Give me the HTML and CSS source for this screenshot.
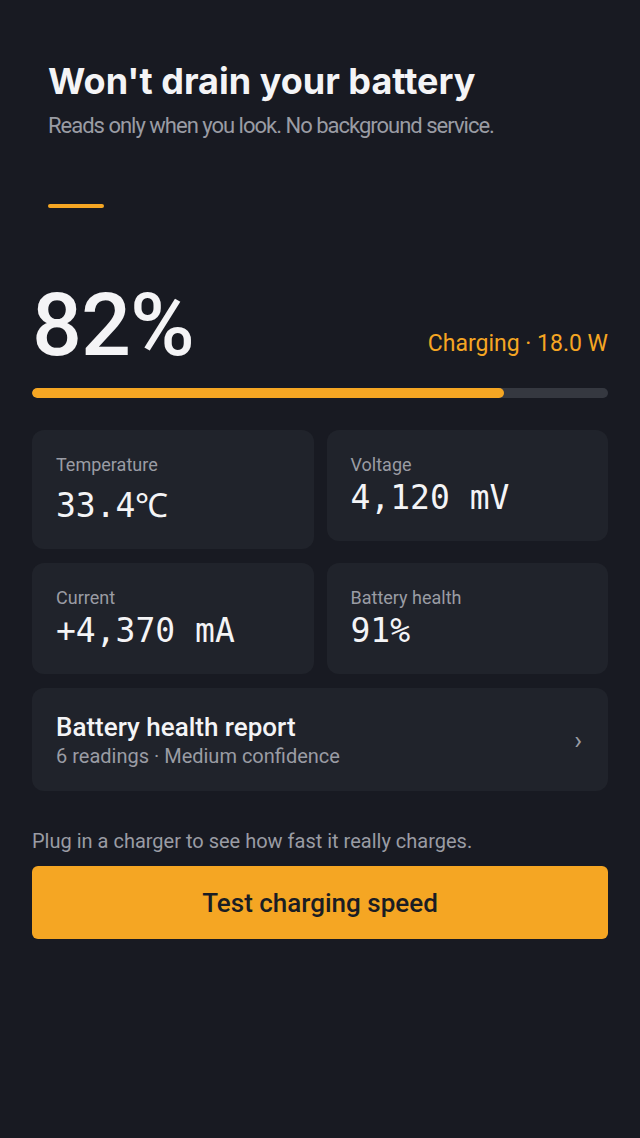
FILE: index.html
```html
<!DOCTYPE html>
<html>
<head>
<meta charset="utf-8">
<link rel="stylesheet" href="styles.css">
</head>
<body>
<main class="screen">
  <header class="intro">
    <h1 class="title">Won't drain your battery</h1>
    <p class="subtitle">Reads only when you look. No background service.</p>
    <div class="accent"></div>
  </header>

  <section class="level">
    <div class="level-row">
      <div class="percent">82%</div>
      <div class="status">Charging · 18.0 W</div>
    </div>
    <div class="bar"><div class="bar-fill" style="width:82%"></div></div>
  </section>

  <section class="grid">
    <div class="card">
      <div class="label">Temperature</div>
      <div class="value value--tall">33.4℃</div>
    </div>
    <div class="card">
      <div class="label">Voltage</div>
      <div class="value">4,120 mV</div>
    </div>
    <div class="card">
      <div class="label">Current</div>
      <div class="value">+4,370 mA</div>
    </div>
    <div class="card">
      <div class="label">Battery health</div>
      <div class="value">91%</div>
    </div>
  </section>

  <a class="report">
    <div class="report-text">
      <div class="report-title">Battery health report</div>
      <div class="report-sub">6 readings · Medium confidence</div>
    </div>
    <span class="chevron">›</span>
  </a>

  <p class="hint">Plug in a charger to see how fast it really charges.</p>
  <button class="cta">Test charging speed</button>
</main>
</body>
</html>
```

FILE: styles.css
```css
* { box-sizing: border-box; }
html, body {
  margin: 0;
  padding: 0;
  background: #181a22;
  height: 100%;
}
body {
  font-family: Roboto, "Noto Sans", sans-serif;
  color: #f2f3f5;
}
.screen {
  padding: 0 32px;
  display: flex;
  flex-direction: column;
}
.intro {
  padding: 59px 16px 0;
}
.title {
  margin: 0;
  font-family: Inter, Roboto, sans-serif;
  font-weight: 700;
  font-size: 36px;
  letter-spacing: 0;
  line-height: 44px;
  color: #f4f4f6;
}
.subtitle {
  margin: 9px 0 0;
  font-family: Roboto, sans-serif;
  font-size: 22px;
  letter-spacing: -1px;
  line-height: 28px;
  color: #9a9ca4;
}
.accent {
  margin-top: 64px;
  width: 56px;
  height: 4px;
  border-radius: 2px;
  background: #f5a623;
}
.level {
  margin-top: 72px;
}
.level-row {
  display: flex;
  justify-content: space-between;
  align-items: flex-end;
}
.percent {
  font-size: 88px;
  line-height: 90px;
  font-weight: 500;
  letter-spacing: -1px;
  color: #f4f4f6;
}
.status {
  font-size: 23px;
  line-height: 28px;
  color: #f5a623;
  margin-bottom: 12px;
}
.bar {
  margin-top: 18px;
  height: 10px;
  border-radius: 5px;
  background: #353840;
  overflow: hidden;
}
.bar-fill {
  height: 100%;
  border-radius: 5px;
  background: #f5a623;
}
.grid {
  margin-top: 32px;
  display: grid;
  grid-template-columns: 1fr 1fr;
  column-gap: 13px;
  row-gap: 14px;
  align-items: start;
}
.card {
  background: #20232b;
  border-radius: 12px;
  padding: 24px 24px 21px;
}
.label {
  font-size: 18px;
  line-height: 22px;
  color: #9a9ca4;
}
.value {
  font-family: "DejaVu Sans Mono", "Liberation Mono", monospace;
  font-size: 33px;
  line-height: 44px;
  color: #f4f4f6;
}
.value--tall {
  margin-top: 8px;
}
.report {
  margin-top: 14px;
  background: #20232b;
  border-radius: 12px;
  padding: 24px 26px 23px 24px;
  display: flex;
  align-items: center;
  justify-content: space-between;
}
.report-title {
  font-size: 26px;
  font-weight: 500;
  line-height: 30px;
  color: #f4f4f6;
}
.report-sub {
  margin-top: 2px;
  font-size: 20px;
  line-height: 24px;
  color: #9a9ca4;
}
.chevron {
  font-size: 26px;
  color: #9a9ca4;
}
.hint {
  margin: 37px 0 0;
  font-size: 20px;
  line-height: 26px;
  color: #9a9ca4;
}
.cta {
  margin-top: 12px;
  height: 73px;
  border: none;
  border-radius: 6px;
  background: #f5a623;
  color: #1a1d24;
  font-family: Roboto, sans-serif;
  font-size: 26px;
  font-weight: 500;
}
```
